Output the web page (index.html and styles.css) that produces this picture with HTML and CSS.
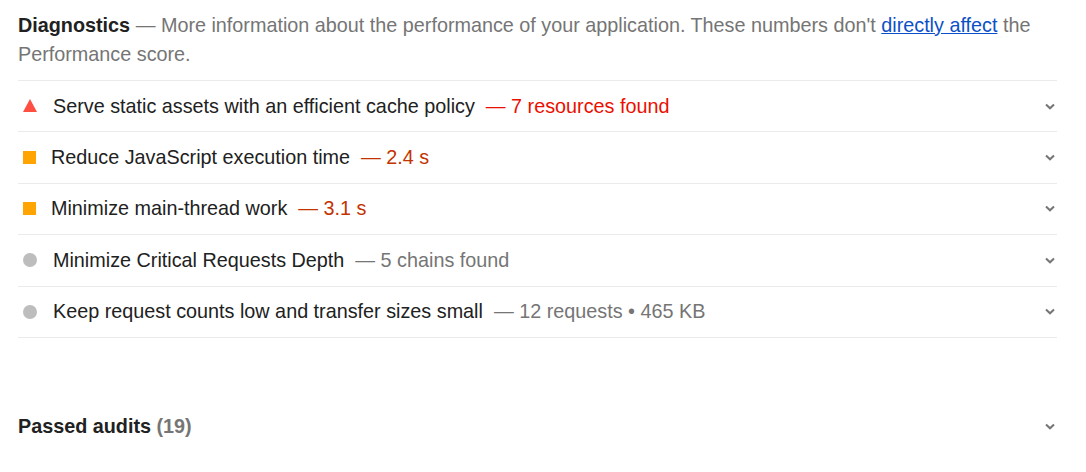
FILE: index.html
```html
<!DOCTYPE html>
<html>
<head>
<meta charset="utf-8">
<link rel="stylesheet" href="styles.css">
</head>
<body>
<div class="report">
  <div class="group-header">
    <span class="group-title">Diagnostics</span>
    <span class="group-desc">— More information about the performance of your application. These numbers don't <a class="link" href="#">directly affect</a> the Performance score.</span>
  </div>
  <div class="audits">
    <div class="audit">
      <span class="icon icon-fail"></span>
      <span class="audit-title">Serve static assets with an efficient cache policy</span>
      <span class="display display-fail">— 7 resources found</span>
      <svg class="chevron" width="10" height="7" viewBox="0 0 10 7"><polyline points="1,1.5 5,5.3 9,1.5" fill="none" stroke="#757575" stroke-width="2"/></svg>
    </div>
    <div class="audit">
      <span class="icon icon-average"></span>
      <span class="audit-title">Reduce JavaScript execution time</span>
      <span class="display display-average">— 2.4 s</span>
      <svg class="chevron" width="10" height="7" viewBox="0 0 10 7"><polyline points="1,1.5 5,5.3 9,1.5" fill="none" stroke="#757575" stroke-width="2"/></svg>
    </div>
    <div class="audit">
      <span class="icon icon-average"></span>
      <span class="audit-title">Minimize main-thread work</span>
      <span class="display display-average">— 3.1 s</span>
      <svg class="chevron" width="10" height="7" viewBox="0 0 10 7"><polyline points="1,1.5 5,5.3 9,1.5" fill="none" stroke="#757575" stroke-width="2"/></svg>
    </div>
    <div class="audit">
      <span class="icon icon-info"></span>
      <span class="audit-title">Minimize Critical Requests Depth</span>
      <span class="display">— 5 chains found</span>
      <svg class="chevron" width="10" height="7" viewBox="0 0 10 7"><polyline points="1,1.5 5,5.3 9,1.5" fill="none" stroke="#757575" stroke-width="2"/></svg>
    </div>
    <div class="audit">
      <span class="icon icon-info"></span>
      <span class="audit-title">Keep request counts low and transfer sizes small</span>
      <span class="display">— 12 requests • 465 KB</span>
      <svg class="chevron" width="10" height="7" viewBox="0 0 10 7"><polyline points="1,1.5 5,5.3 9,1.5" fill="none" stroke="#757575" stroke-width="2"/></svg>
    </div>
  </div>
  <div class="passed">
    <span class="passed-title">Passed audits <span class="count">(19)</span></span>
    <svg class="chevron" width="10" height="7" viewBox="0 0 10 7"><polyline points="1,1.5 5,5.3 9,1.5" fill="none" stroke="#757575" stroke-width="2"/></svg>
  </div>
</div>
</body>
</html>
```

FILE: styles.css
```css
html, body {
  margin: 0;
  padding: 0;
  background: #ffffff;
}

body {
  font-family: "Liberation Sans", Arial, sans-serif;
  font-size: 19.8px;
  line-height: 29px;
  color: #212121;
}

.report {
  width: 1039px;
  padding: 11px 0 0 18px;
}

.group-header {
  margin-bottom: 11px;
}

.group-title {
  font-weight: bold;
  color: #212121;
}

.group-desc {
  color: #757575;
}

.link {
  color: #0c50c7;
  text-decoration: underline;
}

.audits {
  border-bottom: 1px solid #ebebeb;
}

.audit {
  display: flex;
  align-items: center;
  height: 50.4px;
  border-top: 1px solid #ebebeb;
}

.icon {
  flex: none;
  margin-left: 5px;
}

.icon-fail {
  width: 0;
  height: 0;
  border-left: 7px solid transparent;
  border-right: 7px solid transparent;
  border-bottom: 13px solid #ff4e42;
  margin-right: 16px;
  margin-top: -1px;
}

.icon-average {
  width: 13px;
  height: 13px;
  background: #ffa400;
  margin-right: 15px;
}

.icon-info {
  width: 14px;
  height: 14px;
  border-radius: 50%;
  background: #bdbdbd;
  margin-right: 16px;
}

.audit-title {
  color: #212121;
}

.display {
  margin-left: 11px;
  color: #757575;
}

.display-fail {
  color: #eb0f00;
}

.display-average {
  color: #c33300;
}

.chevron {
  flex: none;
  margin-left: auto;
  margin-right: 2px;
}

.passed {
  display: flex;
  align-items: center;
  margin-top: 74px;
  height: 29px;
}

.passed-title {
  font-weight: bold;
  color: #212121;
}

.count {
  color: #757575;
}
```
